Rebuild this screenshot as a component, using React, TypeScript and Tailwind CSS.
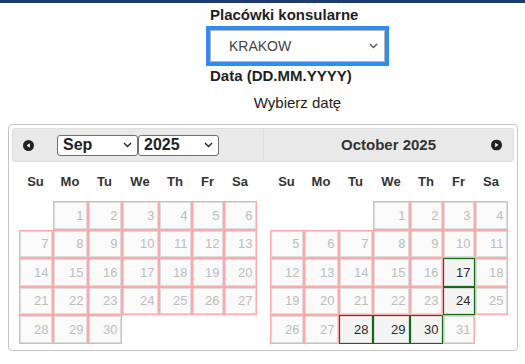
import React from "react"

type Cell = { day: number; open?: boolean } | null

const cols = "grid grid-cols-[34px_35px_34px_37px_33px_32px_33px]"
const dayNames = ["Su", "Mo", "Tu", "We", "Th", "Fr", "Sa"]

function buildMonth(offset: number, days: number, open: number[]): Cell[] {
  const cells: Cell[] = []
  for (let i = 0; i < offset; i++) cells.push(null)
  for (let d = 1; d <= days; d++) cells.push({ day: d, open: open.includes(d) })
  while (cells.length % 7 !== 0) cells.push(null)
  return cells
}

const september = buildMonth(1, 30, [])
const october = buildMonth(3, 31, [17, 24, 28, 29, 30])

function CircleArrow({ dir }: { dir: "left" | "right" }) {
  return (
    <svg width="11" height="11" viewBox="0 0 11 11">
      <circle cx="5.5" cy="5.5" r="5.5" fill="#222" />
      {dir === "left" ? (
        <path d="M3.6 5.5 L6.8 3.2 L6.8 7.8 Z" fill="#fff" />
      ) : (
        <path d="M7.4 5.5 L4.2 3.2 L4.2 7.8 Z" fill="#fff" />
      )}
    </svg>
  )
}

function Chevron({ color = "#333" }: { color?: string }) {
  return (
    <svg width="9" height="6" viewBox="0 0 9 6">
      <path d="M1 1 L4.5 4.5 L8 1" fill="none" stroke={color} strokeWidth="1.4" />
    </svg>
  )
}

function MiniSelect({ value }: { value: string }) {
  return (
    <div className="flex h-[21px] w-[81px] items-center justify-between rounded-[3px] border border-[#6f6f6f] bg-white pl-[5px] pr-[5px]">
      <span className="text-[16px] font-bold leading-none text-[#222]">{value}</span>
      <Chevron color="#222" />
    </div>
  )
}

function MonthGrid({ cells }: { cells: Cell[] }) {
  return (
    <div className="flex w-[251px] flex-col items-center">
      <div className={`${cols} h-[39px] items-center`}>
        {dayNames.map((n) => (
          <div key={n} className="text-center text-[13px] font-bold text-[#333]">
            {n}
          </div>
        ))}
      </div>
      <div className={`${cols} auto-rows-[28.5px]`}>
        {cells.map((c, i) =>
          c ? (
            <div
              key={i}
              className={
                c.open
                  ? "border-[1.5px] border-[#0f6f0f]"
                  : "border border-[#ffaaaa]"
              }
            >
              <div
                className={
                  "flex h-full items-center justify-end border border-[#dcdcdc] pr-[2px] text-[13px] " +
                  (c.open ? "bg-[#f4f4f4] text-[#2a2a2a]" : "bg-[#fafafa] text-[#bdbdbd]")
                }
              >
                {c.day}
              </div>
            </div>
          ) : (
            <div key={i} />
          )
        )}
      </div>
    </div>
  )
}

export default function App() {
  return (
    <div className="min-h-screen bg-white font-['Liberation_Sans',Arial,sans-serif] text-[#222]">
      <div className="h-[3px] bg-[#1d3b72]" />

      <div className="ml-[210px] w-[175px] pt-[3px]">
        <div className="h-[18px] text-[15px] font-bold leading-[18px] text-[#1f1f1f]">
          Placówki konsularne
        </div>
        <div className="mt-[6px] flex h-[32px] items-center justify-between border border-[#b5b5b5] bg-white pl-[18px] pr-[6px] outline outline-4 outline-[#2f8cf5]">
          <span className="text-[14px] text-[#444]">KRAKOW</span>
          <Chevron color="#555" />
        </div>
        <div className="mt-[5px] h-[18px] text-[15px] font-bold leading-[18px] text-[#1f1f1f]">
          Data (DD.MM.YYYY)
        </div>
        <div className="mt-[9px] h-[18px] text-center text-[15px] leading-[18px] text-[#222]">
          Wybierz datę
        </div>
      </div>

      <div className="ml-[8px] mt-[12px] w-[510px] rounded-[4px] border border-[#c5c5c5] p-[3px]">
        <div className="flex h-[34px] rounded-[3px] border border-[#dddddd] bg-[#e9e9e9]">
          <div className="flex w-[250px] items-center pl-[10px]">
            <CircleArrow dir="left" />
            <div className="ml-[23px] flex">
              <MiniSelect value="Sep" />
              <MiniSelect value="2025" />
            </div>
          </div>
          <div className="relative flex flex-1 items-center justify-center border-l border-[#dddddd]">
            <span className="text-[15px] font-bold text-[#333]">October 2025</span>
            <div className="absolute right-[11px] top-1/2 flex -translate-y-1/2">
              <CircleArrow dir="right" />
            </div>
          </div>
        </div>
        <div className="mb-[3px] flex">
          <MonthGrid cells={september} />
          <MonthGrid cells={october} />
        </div>
      </div>
    </div>
  )
}
